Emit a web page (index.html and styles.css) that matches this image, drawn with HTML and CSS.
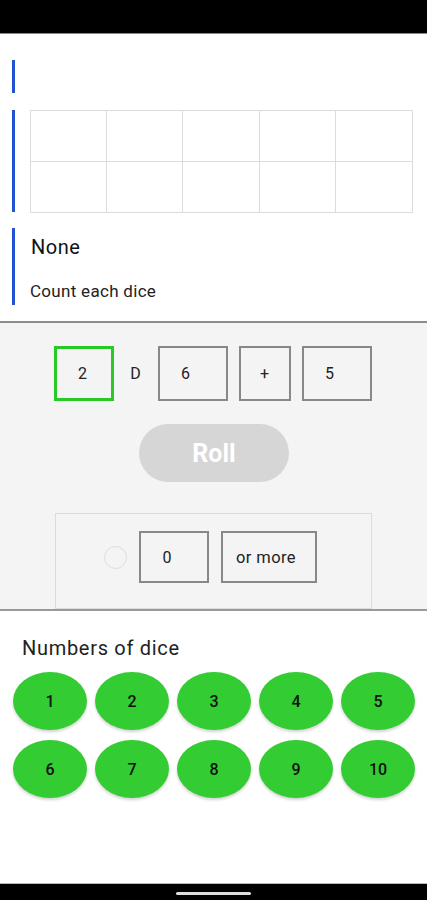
FILE: index.html
```html
<!DOCTYPE html>
<html>
<head>
<meta charset="utf-8">
<link rel="stylesheet" href="styles.css">
</head>
<body>
<div class="screen">
  <div class="status-bar"></div>
  <div class="top">
    <div class="block block-empty"></div>
    <div class="block block-table">
      <div class="grid">
        <div class="cell"></div><div class="cell"></div><div class="cell"></div><div class="cell"></div><div class="cell"></div>
        <div class="cell"></div><div class="cell"></div><div class="cell"></div><div class="cell"></div><div class="cell"></div>
      </div>
    </div>
    <div class="block block-text">
      <div class="result">None</div>
      <div class="mode">Count each dice</div>
    </div>
  </div>
  <div class="panel">
    <div class="dice-row">
      <div class="field field-active">2</div>
      <div class="d-label">D</div>
      <div class="field field-wide">6</div>
      <div class="field field-narrow">+</div>
      <div class="field field-wide">5</div>
    </div>
    <div class="roll">Roll</div>
    <div class="cond-box">
      <div class="radio"></div>
      <div class="field field-cond">0</div>
      <div class="field field-more">or more</div>
    </div>
  </div>
  <div class="numbers">
    <div class="numbers-title">Numbers of dice</div>
    <div class="num-grid">
      <div class="num">1</div><div class="num">2</div><div class="num">3</div><div class="num">4</div><div class="num">5</div>
      <div class="num">6</div><div class="num">7</div><div class="num">8</div><div class="num">9</div><div class="num">10</div>
    </div>
  </div>
  <div class="nav-bar"><div class="home-indicator"></div></div>
</div>
</body>
</html>
```
FILE: styles.css
```css
* { box-sizing: border-box; }
html, body { margin: 0; padding: 0; }
body {
  font-family: Roboto, "Noto Sans", sans-serif;
  color: #222;
  background: #fff;
}
.screen {
  width: 427px;
  height: 900px;
  display: flex;
  flex-direction: column;
  overflow: hidden;
}
.status-bar {
  height: 34px;
  background: #000;
  border-bottom: 1px solid #8a8a8a;
  flex: none;
}
.top {
  padding: 26px 14px 16px 12px;
  border-bottom: 2px solid #8c8c8c;
  flex: none;
}
.block {
  border-left: 3px solid #2152d6;
  padding-left: 15px;
}
.block-empty { height: 33px; }
.block-table { margin-top: 18px; height: 102px; }
.grid {
  display: grid;
  grid-template-columns: repeat(5, 1fr);
  grid-template-rows: 51px 51px;
  border: 1px solid #dcdcdc;
  margin-top: -1px;
  height: 103px;
}
.cell {
  border-right: 1px solid #dcdcdc;
  border-bottom: 1px solid #dcdcdc;
}
.cell:nth-child(5n) { border-right: none; }
.cell:nth-child(n+6) { border-bottom: none; }
.block-text {
  margin-top: 16px;
  height: 77px;
  padding-top: 7px;
  padding-left: 16px;
}
.result {
  font-size: 20px;
  line-height: 24px;
  letter-spacing: 0.5px;
  color: #111;
}
.mode {
  font-size: 17px;
  line-height: 20px;
  letter-spacing: 0.3px;
  margin-top: 22px;
  margin-left: -1px;
  color: #222;
}
.panel {
  height: 288px;
  background: #f4f4f4;
  border-bottom: 2px solid #999;
  display: flex;
  flex-direction: column;
  align-items: center;
  padding-top: 23px;
  flex: none;
  overflow: hidden;
}
.dice-row {
  display: flex;
  align-items: center;
  gap: 11px;
  margin-right: 2px;
}
.field {
  height: 55px;
  border: 2px solid #888;
  display: flex;
  align-items: center;
  justify-content: center;
  font-size: 16px;
  color: #222;
}
.field-active { width: 60px; border: 3px solid #27c927; padding-right: 2px; }
.field-wide { width: 70px; padding-right: 14px; }
.field-narrow { width: 52px; }
.d-label { width: 22px; text-align: center; font-size: 16px; color: #222; }
.roll {
  margin-top: 23px;
  width: 150px;
  height: 61px;
  border-radius: 30px;
  background: #d6d6d6;
  color: #fff;
  font-size: 25px;
  font-weight: 700;
  display: flex;
  align-items: center;
  justify-content: center;
  margin-left: 1px;
}
.cond-box {
  margin-top: 31px;
  width: 317px;
  height: 100px;
  border: 1px solid #dcdcdc;
  display: flex;
  align-items: flex-start;
  justify-content: center;
  gap: 12px;
  padding-top: 17px;
  padding-right: 6px;
}
.radio {
  width: 23px;
  height: 23px;
  border-radius: 50%;
  border: 1.5px solid #ddd;
  margin-top: 15px;
}
.field-cond { width: 70px; height: 52px; padding-right: 14px; }
.field-more { width: 96px; height: 52px; font-size: 16.5px; letter-spacing: 0.4px; padding-right: 6px; }
.numbers {
  flex: 1;
  padding: 25px 12px 0 13px;
}
.numbers-title {
  font-size: 20px;
  line-height: 24px;
  letter-spacing: 0.7px;
  color: #222;
  margin-left: 9px;
}
.num-grid {
  display: grid;
  grid-template-columns: repeat(5, 74px);
  grid-auto-rows: 58px;
  column-gap: 8px;
  row-gap: 10px;
  margin-top: 12px;
}
.num {
  border-radius: 50%;
  background: #33cc33;
  box-shadow: 0 2px 3px rgba(0, 0, 0, 0.18);
  display: flex;
  align-items: center;
  justify-content: center;
  font-size: 16px;
  font-weight: 500;
  color: #111;
}
.nav-bar {
  height: 17px;
  background: #000;
  border-top: 1px solid #bbb;
  display: flex;
  justify-content: center;
  padding-top: 8px;
  flex: none;
}
.home-indicator {
  width: 75px;
  height: 3px;
  border-radius: 2px;
  background: #ddd;
}
```
